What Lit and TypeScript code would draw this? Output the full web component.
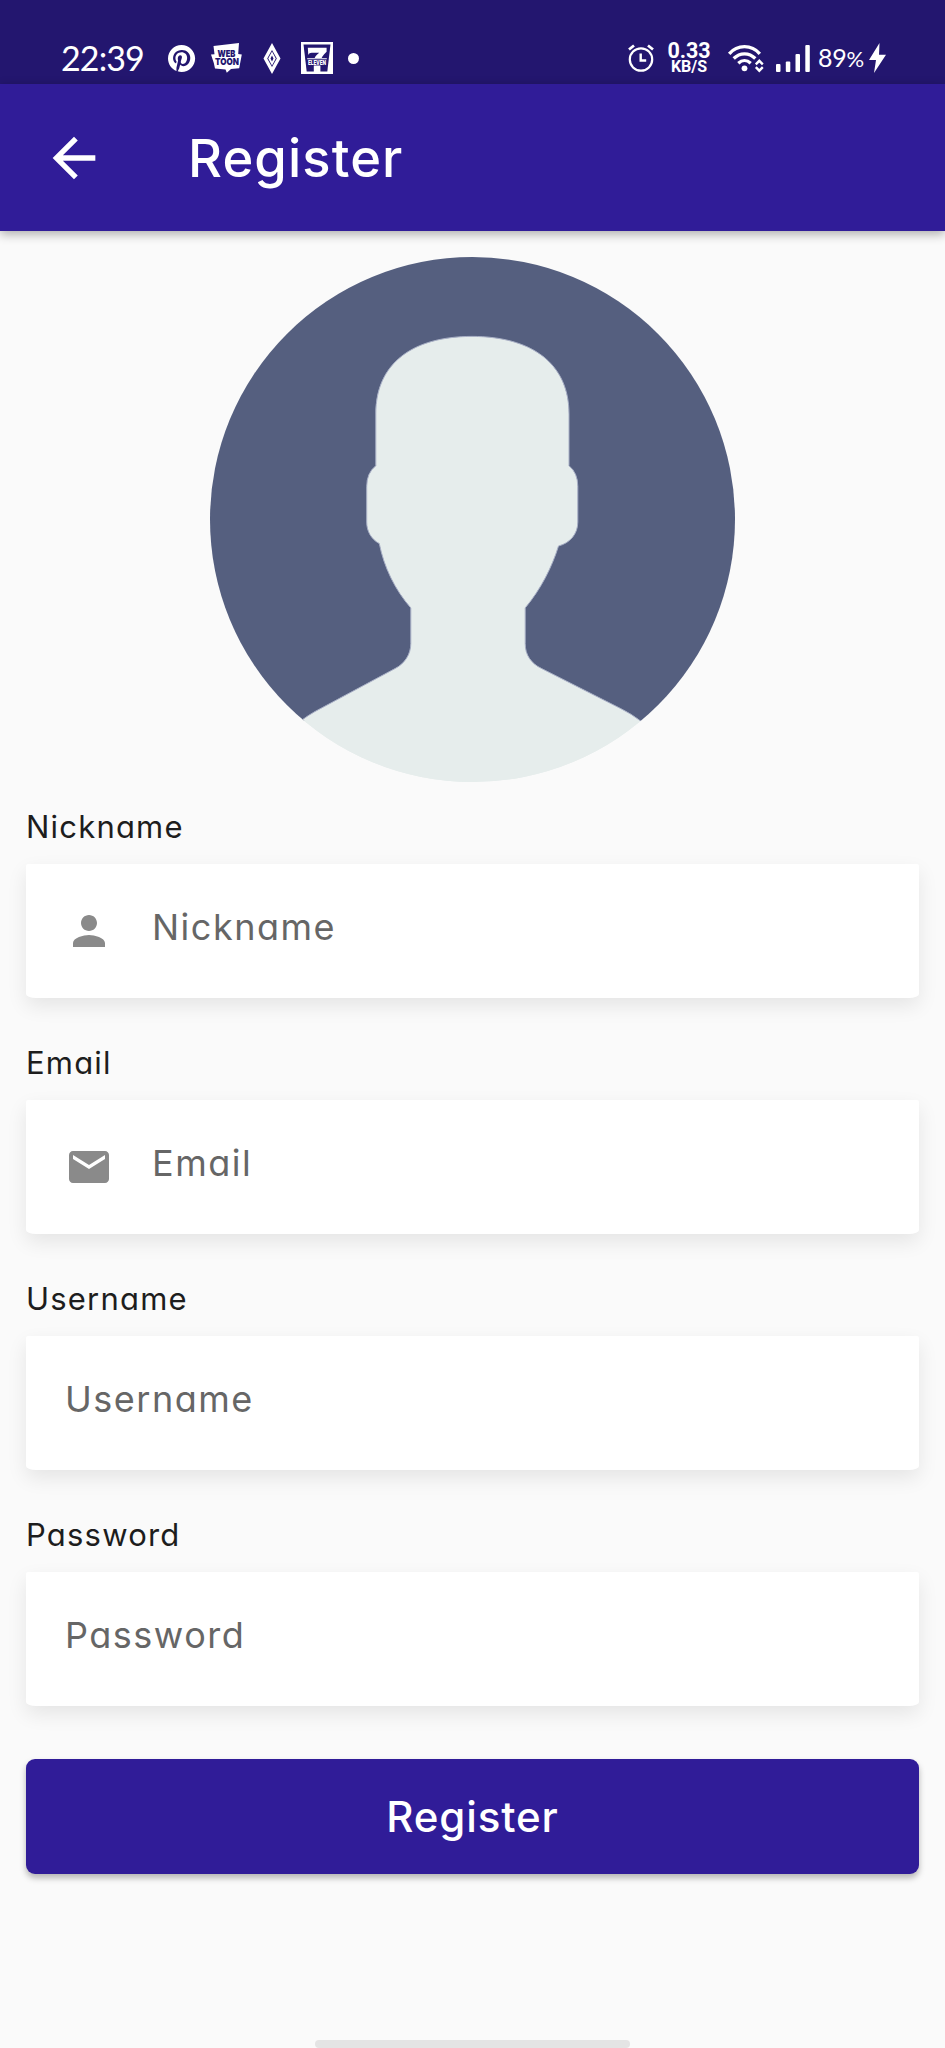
import { LitElement, html, css, svg, nothing } from "lit";
import { customElement, property } from "lit/decorators.js";

const personIcon = svg`<path d="M12 12c2.21 0 4-1.79 4-4s-1.79-4-4-4-4 1.79-4 4 1.79 4 4 4zm0 2c-2.67 0-8 1.34-8 4v2h16v-2c0-2.66-5.33-4-8-4z"/>`;
const mailIcon = svg`<path d="M20 4H4c-1.1 0-1.99.9-1.99 2L2 18c0 1.1.9 2 2 2h16c1.1 0 2-.9 2-2V6c0-1.1-.9-2-2-2zm0 4l-8 5-8-5V6l8 5 8-5v2z"/>`;

@customElement("status-bar")
class StatusBar extends LitElement {
  static styles = css`
    :host {
      display: flex;
      box-sizing: border-box;
      height: 84px;
      padding: 32px 59px 0 61px;
      align-items: center;
      justify-content: space-between;
      background: #23166f;
      color: #fff;
    }
    .side { display: flex; align-items: center; height: 52px; }
    svg { display: block; flex: none; fill: #fff; overflow: visible; }
    .time { font: 400 34px/52px Lato, sans-serif; width: 107px; letter-spacing: -0.9px; white-space: nowrap; }
    .pin { margin-right: 16px; }
    .toon { margin-right: 21px; }
    .gem { margin-right: 20px; }
    .seven { margin-right: 15px; }
    .dot { width: 11px; height: 11px; border-radius: 50%; background: #fff; }
    .alarm { margin-right: 13px; }
    .rate { display: flex; flex-direction: column; align-items: center; width: 44px; margin-right: 17px; font-family: Roboto, sans-serif; font-weight: 700; }
    .rate-value { font-size: 21.5px; line-height: 17px; }
    .rate-unit { font-size: 16px; line-height: 15px; }
    .wifi { margin-right: 12px; }
    .signal { margin-right: 8px; }
    .battery { font: 400 25px/52px Lato, sans-serif; width: 51px; white-space: nowrap; letter-spacing: -0.2px; }
    .battery-sign { font-size: 22px; }
    .toon-text { font: 900 9.6px/1 Inter, sans-serif; fill: #23166f; }
    .seven-text { font: 900 6.5px/1 Roboto, sans-serif; fill: #fff; }
  `;
  render() {
    return html`
      <div class="side">
        <span class="time">22:39</span>
        <svg class="pin" width="27" height="27" viewBox="0 0 24 24">
          <path d="M12 0C5.4 0 0 5.4 0 12c0 5.1 3.2 9.4 7.6 11.2-.1-.9-.2-2.4 0-3.5l1.4-6s-.3-.7-.3-1.8c0-1.7 1-2.9 2.2-2.9 1 0 1.5.8 1.5 1.700 0 1-.7 2.600-1 4-.3 1.200.6 2.200 1.800 2.200 2.100 0 3.800-2.200 3.800-5.500 0-2.900-2.100-4.900-5-4.900-3.400 0-5.400 2.600-5.400 5.200 0 1 .4 2.100.9 2.700.1.1.1.2.1.3l-.3 1.400c0 .2-.2.3-.4.2-1.500-.7-2.400-2.900-2.400-4.600 0-3.800 2.800-7.300 7.900-7.300 4.200 0 7.400 3 7.400 6.900 0 4.100-2.600 7.500-6.200 7.500-1.200 0-2.400-.6-2.800-1.400l-.7 2.900c-.3 1-1 2.300-1.500 3.100 1.100.3 2.300.5 3.500.5 6.600 0 12-5.400 12-12S18.600 0 12 0z"/>
        </svg>
        <svg class="toon" width="31" height="30" viewBox="0 0 31 30">
          <path d="M2.500 3 28 0l-.8 11 3.600.4-2.600 13.800-8.200.9-4.200 3.600-1.300-3.200L4 25.500 2.800 20 0 11.500l3.500-.3z"/>
          <text class="toon-text" x="6.400" y="13.500" textLength="18" lengthAdjust="spacingAndGlyphs">WEB</text>
          <text class="toon-text" x="4" y="22" textLength="24" lengthAdjust="spacingAndGlyphs">TOON</text>
        </svg>
        <svg class="gem" width="18" height="31" viewBox="0 0 18 31">
          <path fill-rule="evenodd" d="M9 0 17.500 15.500 9 31 .5 15.500zM9 7 4.200 15.500 9 24l4.800-8.500z"/>
          <path fill-rule="evenodd" d="M9 8.500 12.800 15.500 9 22.500 5.200 15.500zM9 12.500l-1.500 3L9 18.500l1.500-3z"/>
        </svg>
        <svg class="seven" width="32" height="32" viewBox="0 0 32 32">
          <path d="M0 0h32v32H0z"/>
          <path fill="#23166f" d="M2.500 2.500h27l-3.200 27H5.700z"/>
          <path d="M6.800 5.800h18.800v4c-3.800 3.500-5.300 6.200-6 9.200h-7c.8-3.500 2.600-6 5.600-8.200h-7.500c-1.800 0-2.700.8-3.400 2.200z"/>
          <path fill="#23166f" d="M6 16h20v8H6z"/>
          <path d="M6.200 16.300h19.600v.9H6.200zM12.800 23.500h6.600v8h-6.600z"/>
          <text class="seven-text" x="7" y="22.500" textLength="18" lengthAdjust="spacingAndGlyphs">ELEVEN</text>
        </svg>
        <span class="dot"></span>
      </div>
      <div class="side">
        <svg class="alarm" width="26" height="28" viewBox="0 0 26 28">
          <g fill="none" stroke="#fff">
            <circle cx="13" cy="15.500" r="11.200" stroke-width="2.200"/>
            <path stroke-width="2.400" d="M12.700 9.500v7h5.500"/>
            <path stroke-width="2.800" d="M1 5.500 6 1.500M25 5.500 20 1.500"/>
          </g>
        </svg>
        <span class="rate"><span class="rate-value">0.33</span><span class="rate-unit">KB/S</span></span>
        <svg class="wifi" width="36" height="28" viewBox="0 0 36 28">
          <g fill="none" stroke="#fff" stroke-width="3.300">
            <path d="M1.200 9.800C9.500 .3 23.500 .3 31.800 9.800"/>
            <path d="M5.700 14.500c6.200-6.300 15.400-6.300 21.600 0"/>
            <path d="M10.300 19.200c3.800-3.500 8.600-3.500 12.400 0"/>
          </g>
          <circle cx="16.500" cy="24.300" r="2.900"/>
          <g fill="none" stroke="#fff" stroke-width="2.400">
            <path d="m27.800 20.300 3.500-3.500 3.500 3.500M27.800 23.200l3.500 3.500 3.500-3.500"/>
          </g>
        </svg>
        <svg class="signal" width="34" height="27" viewBox="0 0 34 27">
          <rect x="0" y="19" width="4.500" height="8" rx="1"/>
          <rect x="9.800" y="16.500" width="4.500" height="10.500" rx="1"/>
          <rect x="19.500" y="9" width="4.500" height="18" rx="1"/>
          <rect x="29.300" y="0" width="4.500" height="27" rx="1"/>
        </svg>
        <span class="battery">89<span class="battery-sign">%</span></span>
        <svg class="bolt" width="17" height="30" viewBox="0 0 17 30">
          <path d="M10.500 0 0 17h7L5 30 17 11.800H10z"/>
        </svg>
      </div>
    `;
  }
}

@customElement("app-header")
class AppHeader extends LitElement {
  static styles = css`
    :host {
      display: flex;
      align-items: center;
      box-sizing: border-box;
      height: 147px;
      padding-left: 42px;
      background: #301c98;
      box-shadow: 0 3px 10px rgba(0, 0, 0, 0.32);
      color: #fff;
    }
    svg { display: block; width: 64px; height: 64px; fill: #fff; margin-right: 82px; }
    h1 { margin: 0; font: 500 52.5px/64px Inter, sans-serif; letter-spacing: 1.1px; }
  `;
  render() {
    return html`
      <svg viewBox="0 0 24 24"><path d="M20 11H7.830l5.590-5.590L12 4l-8 8 8 8 1.410-1.410L7.830 13H20v-2z"/></svg>
      <h1>Register</h1>
    `;
  }
}

@customElement("profile-avatar")
class ProfileAvatar extends LitElement {
  static styles = css`
    :host {
      display: block;
      width: 525px;
      height: 525px;
      border-radius: 50%;
      overflow: hidden;
      background: linear-gradient(#555f7f 0 464px, #e6edec 464px);
    }
    svg { display: block; }
  `;
  render() {
    return html`
      <svg width="525" height="525" viewBox="0 0 525 525">
        <path fill="#e6edec" stroke="#a9b0c6" stroke-width="1" d="M262 79.400
          C321 79.400 359 106 359 157 V208.700 Q367.800 216 367.800 229.400 V265
          C367.800 277 360 286 348.500 289 C342 310 331 332 315.200 350.900 V386.600
          C315.200 398 321 406.500 331.700 411.600 L410.600 451.500 Q421 456.500 432 465 V530 H92 V463
          Q98 458.500 105 454.500 L185 411.600 C195 406.500 200.800 397 200.800 386.600 V350.900
          C185 333 174 310 169.300 286.600 C161 282 156.700 274 156.700 265 V229.400
          Q156.700 216 165.800 208.700 V157 C165.800 106 203 79.400 262 79.400z"/>
      </svg>
    `;
  }
}

@customElement("form-field")
class FormField extends LitElement {
  @property() label = "";
  @property({ attribute: false }) icon: unknown = nothing;

  static styles = css`
    :host { display: block; }
    .label {
      display: block;
      margin-bottom: 13px;
      font: 400 31px/49px Inter, sans-serif;
      font-feature-settings: "cv11";
      letter-spacing: 1.2px;
      color: #1d1d1d;
    }
    .box {
      display: flex;
      align-items: center;
      box-sizing: border-box;
      height: 134px;
      padding-left: 39px;
      background: #fff;
      border-radius: 2px 2px 10px 10px / 2px 2px 4px 4px;
      box-shadow: 0 8px 20px rgba(0, 0, 0, 0.085);
    }
    svg { display: block; width: 48px; height: 48px; fill: #8a8a8a; margin-right: 39px; }
    .hint {
      padding-bottom: 8px;
      font: 400 36px/50px Inter, sans-serif;
      font-feature-settings: "cv11";
      letter-spacing: 1.5px;
      color: #666;
    }
  `;
  render() {
    return html`
      <span class="label">${this.label}</span>
      <div class="box">
        ${this.icon === nothing ? nothing : html`<svg viewBox="0 0 24 24">${this.icon}</svg>`}
        <span class="hint">${this.label}</span>
      </div>
    `;
  }
}

@customElement("app-root")
class AppRoot extends LitElement {
  static styles = css`
    :host {
      display: flex;
      flex-direction: column;
      height: 2048px;
      overflow: hidden;
      background: #fafafa;
    }
    main { display: flex; flex-direction: column; padding: 26px 26px 0; flex: 1; }
    profile-avatar { align-self: center; margin-bottom: 20px; }
    .fields { display: flex; flex-direction: column; gap: 40px; }
    .submit {
      margin: 53px 0 0;
      padding: 0;
      height: 115px;
      border: 0;
      border-radius: 9px;
      background: #301c98;
      box-shadow: 0 4px 6px rgba(0, 0, 0, 0.28);
      color: #fff;
      font: 500 42px/50px Inter, sans-serif;
      letter-spacing: 0.9px;
    }
    .handle { align-self: center; width: 315px; height: 8px; border-radius: 4px; background: #e4e4e4; }
  `;
  render() {
    return html`
      <status-bar></status-bar>
      <app-header></app-header>
      <main>
        <profile-avatar></profile-avatar>
        <div class="fields">
          <form-field label="Nickname" .icon=${personIcon}></form-field>
          <form-field label="Email" .icon=${mailIcon}></form-field>
          <form-field label="Username"></form-field>
          <form-field label="Password"></form-field>
        </div>
        <button class="submit">Register</button>
      </main>
      <div class="handle"></div>
    `;
  }
}
